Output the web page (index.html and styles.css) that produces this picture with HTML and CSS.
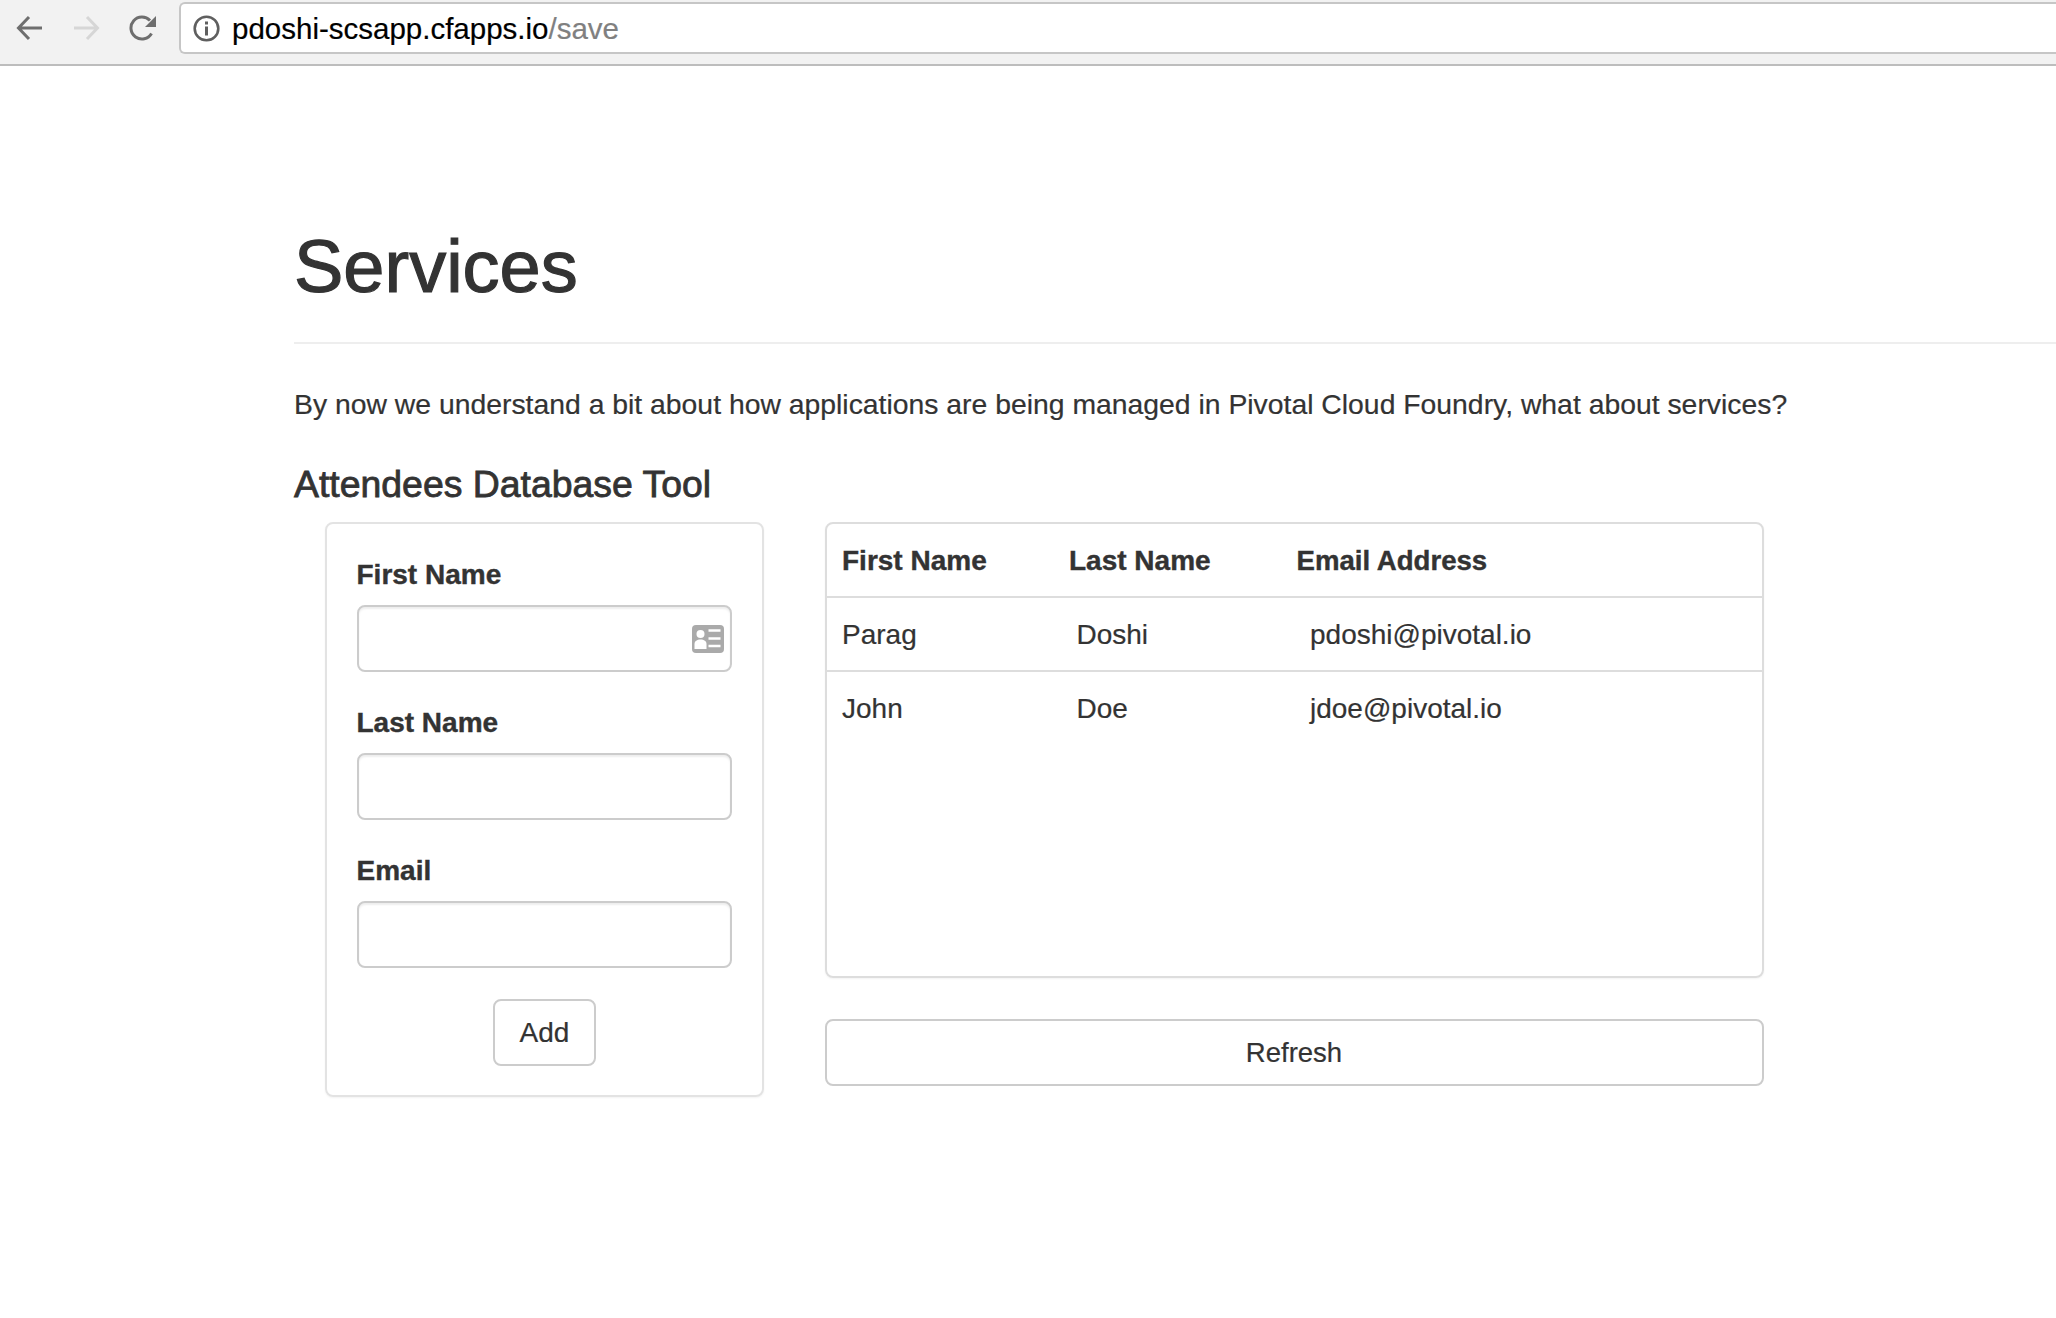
FILE: index.html
```html
<!DOCTYPE html>
<html lang="en">
<head>
<meta charset="utf-8">
<title>Services</title>
<link rel="stylesheet" href="styles.css">
</head>
<body>
<header class="toolbar">
  <svg class="nav-icon" width="28" height="26" viewBox="0 0 28 26"><path d="M26 13H3M13 2 2.500 13 13 24" fill="none" stroke="#6e6e6e" stroke-width="3"/></svg>
  <svg class="nav-icon" width="28" height="26" viewBox="0 0 28 26"><path d="M2 13H25M15 2 25.500 13 15 24" fill="none" stroke="#d6d6d6" stroke-width="3"/></svg>
  <svg class="nav-icon reload" width="28" height="26" viewBox="0 0 28 26"><path d="M22.500 18.500A11 11 0 1 1 21 5.500" fill="none" stroke="#6e6e6e" stroke-width="3"/><path d="M27 1V12H16Z" fill="#6e6e6e"/></svg>
  <div class="omnibox">
    <svg class="info-icon" width="27" height="27" viewBox="0 0 27 27"><circle cx="13.500" cy="13.500" r="11.800" fill="none" stroke="#5f5f5f" stroke-width="2.600"/><rect x="12" y="11.500" width="3" height="9" fill="#5f5f5f"/><rect x="12" y="6.500" width="3" height="3" fill="#5f5f5f"/></svg>
    <span class="url-host">pdoshi-scsapp.cfapps.io</span><span class="url-path">/save</span>
  </div>
</header>
<main class="page">
  <h1 class="title">Services</h1>
  <p class="intro">By now we understand a bit about how applications are being managed in Pivotal Cloud Foundry, what about services?</p>
  <h3 class="subtitle">Attendees Database Tool</h3>
  <div class="columns">
    <form class="well">
      <label class="field-label">First Name</label>
      <div class="input first">
        <svg class="card-icon" width="32" height="28" viewBox="0 0 32 28"><rect width="32" height="28" rx="4" fill="#aaa"/><circle cx="8.500" cy="9" r="4" fill="#fff"/><path d="M2.500 24V19C2.500 16 5 14.500 8.500 14.500S14.500 16 14.500 19V24Z" fill="#fff"/><path d="M16.500 5.500H28.500M16.500 13.500H28.500M16.500 21H28.500" stroke="#fff" stroke-width="2.600"/></svg>
      </div>
      <label class="field-label">Last Name</label>
      <div class="input"></div>
      <label class="field-label">Email</label>
      <div class="input"></div>
      <div class="add-row"><button type="button" class="btn add">Add</button></div>
    </form>
    <section class="results">
      <div class="table-box">
        <table class="people">
          <thead>
            <tr><th>First Name</th><th>Last Name</th><th class="email-head">Email Address</th></tr>
          </thead>
          <tbody>
            <tr class="row-first"><td>Parag</td><td class="shift-a">Doshi</td><td class="shift-b">pdoshi@pivotal.io</td></tr>
            <tr><td>John</td><td class="shift-a">Doe</td><td class="shift-b">jdoe@pivotal.io</td></tr>
          </tbody>
        </table>
      </div>
      <button type="button" class="btn refresh">Refresh</button>
    </section>
  </div>
</main>
</body>
</html>
```
FILE: styles.css
```css
* { box-sizing: border-box; }
html, body { margin: 0; padding: 0; overflow: hidden; }
body {
  height: 1318px;
  background: #fff;
  color: #333;
  font-family: "Liberation Sans", Arial, sans-serif;
  font-size: 28px;
  -webkit-text-stroke: 0.2px currentColor;
}
.toolbar {
  height: 66px;
  background: #f2f2f2;
  border-bottom: 2px solid #bdbdbd;
  display: flex;
  align-items: flex-start;
  padding: 2px 0 0 16px;
}
.nav-icon { margin: 13px 28px 0 0; flex: none; }
.nav-icon.reload { margin-right: 23px; transform: translateX(1px); }
.omnibox {
  flex: 1;
  height: 52px;
  background: #fff;
  border: 2px solid #c6c6c6;
  border-right: 0;
  border-radius: 6px 0 0 6px;
  display: flex;
  align-items: center;
  padding: 2px 0 0 12px;
  font-size: 29.500px;
  margin-right: -10px;
}
.info-icon { margin: -2px 12px 0 0; flex: none; }
.url-host { color: #000; }
.url-path { color: #808080; }
.page { padding: 160px 0 0 294px; }
.title {
  margin: 0;
  font-size: 74px;
  font-weight: 400;
  -webkit-text-stroke: 1.200px #333;
  line-height: 82px;
  padding-bottom: 34px;
  border-bottom: 2px solid #eee;
}
.intro { margin: 0; padding-top: 40px; line-height: 40px; font-size: 28.350px; }
.subtitle { margin: 0; padding-top: 39px; font-size: 37.400px; font-weight: 400; -webkit-text-stroke: 0.8px #333; line-height: 42px; }
.columns { display: flex; align-items: flex-start; margin: 17px 0 0 30.500px; }
.well {
  width: 439px;
  height: 575px;
  border: 2px solid #e3e3e3;
  border-radius: 8px;
  box-shadow: 0 1px 2px rgba(0,0,0,.05);
  padding: 31px 30px 0;
  flex: none;
}
.field-label { display: block; font-weight: 700; -webkit-text-stroke: 0.4px #333; line-height: 40px; height: 40px; margin-bottom: 10px; }
.input {
  height: 67px;
  width: 375px;
  border: 2px solid #ccc;
  border-radius: 8px;
  box-shadow: inset 0 2px 2px rgba(0,0,0,.07);
  margin-bottom: 31px;
  display: flex;
  align-items: center;
  justify-content: flex-end;
  padding-right: 6px;
}
.card-icon { display: block; }
.add-row { display: flex; justify-content: center; }
.btn {
  background: #fff;
  border: 2px solid #ccc;
  border-radius: 8px;
  color: #333;
  font: inherit;
  height: 67px;
  padding: 0;
}
.add { width: 103px; margin-left: 1px; }
.results { width: 939px; margin-left: 61px; flex: none; }
.table-box {
  height: 456px;
  border: 2px solid #ddd;
  border-radius: 8px;
  box-shadow: 0 1px 2px rgba(0,0,0,.05);
}
.people { width: 100%; border-collapse: collapse; table-layout: fixed; }
.people th, .people td { height: 74px; padding: 0 0 0 15.500px; text-align: left; border-bottom: 2px solid #ddd; font-size: 28px; }
.people th { height: 73px; padding-top: 2px; -webkit-text-stroke: 0.4px #333; }
.people th.email-head { font-size: 27.600px; padding-left: 15px; }
.people th:nth-child(1), .people td:nth-child(1) { width: 227px; }
.people th:nth-child(2), .people td:nth-child(2) { width: 228px; }
.people tbody tr:last-child td { border-bottom: 0; }
.people .row-first td { padding-top: 2px; }
.people td.shift-a { padding-left: 23px; }
.people td.shift-b { padding-left: 28.500px; }
.refresh { display: block; width: 100%; margin-top: 41px; font-size: 27.500px; }
```
